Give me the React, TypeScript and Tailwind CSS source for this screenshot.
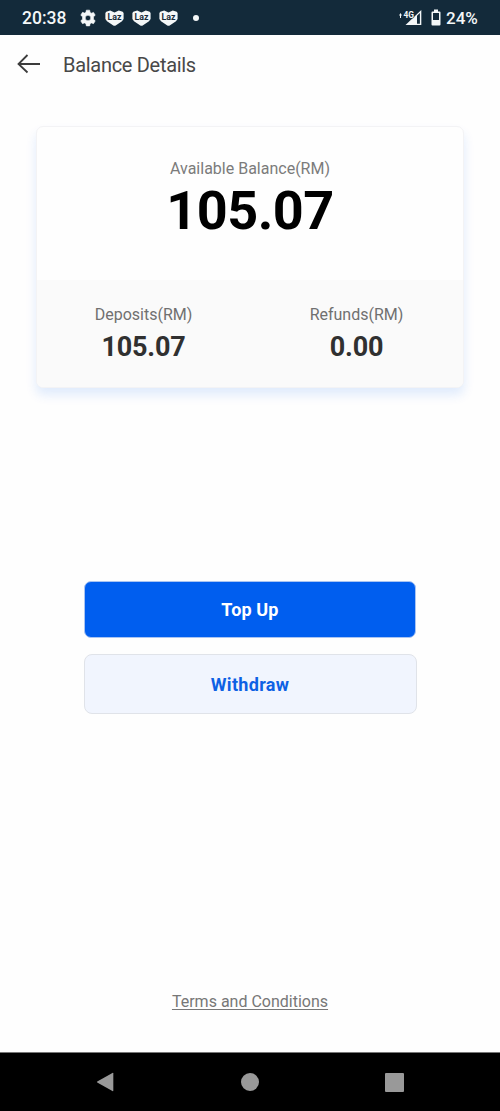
import React from "react";

function GearIcon() {
  return (
    <svg className="ml-[13px] h-[18px] w-[18px]" viewBox="0 0 24 24" fill="#f4f7f8">
      <path
        fillRule="evenodd"
        d="M9.800 1.500h4.400l.6 3 1.700 1 2.900-1 2.200 3.800-2.300 2v3.400l2.300 2-2.200 3.800-2.900-1-1.700 1-.6 3H9.800l-.6-3-1.700-1-2.900 1-2.200-3.800 2.300-2v-3.400l-2.300-2 2.200-3.800 2.900 1 1.700-1zM12 8.300a3.700 3.700 0 1 0 0 7.400 3.700 3.700 0 0 0 0-7.400z"
        stroke="#f4f7f8"
        strokeWidth="0.800"
        strokeLinejoin="round"
      />
    </svg>
  );
}

function LazIcon() {
  return (
    <svg className="h-[16px] w-[19px]" viewBox="0 0 19 16">
      <path
        d="M1.300 1.700 5.200.4 9.500 2.400 13.800.4l3.900 1.300.9 1.200v6l-1.600 2.300-6.300 4.200q-1.200.7-2.400 0L2 11.200.4 8.900v-6z"
        fill="#f4f7f8"
      />
      <text
        x="9.5"
        y="9.600"
        textAnchor="middle"
        textLength="14"
        lengthAdjust="spacingAndGlyphs"
        fontFamily="Roboto, sans-serif"
        fontSize="9"
        fontWeight="700"
        fill="#152a38"
      >
        Laz
      </text>
    </svg>
  );
}

function StatusBar() {
  return (
    <div className="flex h-[35px] items-center bg-[#132a3a] pl-[22px] pr-[22px] text-[#f4f7f8]">
      <span className="w-[44px] whitespace-nowrap pt-[2px] text-[17.5px] font-medium leading-[35px]">20:38</span>
      <GearIcon />
      <div className="ml-[8px] flex gap-[8px]">
        <LazIcon />
        <LazIcon />
        <LazIcon />
      </div>
      <span className="ml-[15px] h-[6px] w-[6px] rounded-full bg-[#f4f7f8]" />
      <div className="ml-auto flex items-center">
        <svg className="h-[18px] w-[24px]" viewBox="0 0 24 18">
          <path d="M1.500 4 3 6.500H2V9H1V6.500H0z" fill="#f4f7f8" />
          <path d="M22.300 1V16H6.500z" fill="#f4f7f8" />
          <path d="M18 6.800 20.900 4V14.800H18z" fill="#132a3a" />
          <text
            x="4.500"
            y="8.900"
            textLength="10.500"
            lengthAdjust="spacingAndGlyphs"
            fontFamily="Roboto, sans-serif"
            fontSize="9.500"
            fontWeight="700"
            fill="#f4f7f8"
            stroke="#132a3a"
            strokeWidth="1"
            paintOrder="stroke"
          >
            4G
          </text>
        </svg>
        <svg className="ml-[8px] h-[18px] w-[10px]" viewBox="0 0 10 18">
          <path
            fillRule="evenodd"
            d="M3 .5h4v2h1.500q1 0 1 1v12q0 1-1 1h-7q-1 0-1-1v-12q0-1 1-1H3zM2 4v7h6V4z"
            fill="#f4f7f8"
          />
        </svg>
        <span className="ml-[5px] w-[32px] whitespace-nowrap text-[17px] font-medium leading-[36px]">24%</span>
      </div>
    </div>
  );
}

function Amount({ label, value }: { label: string; value: string }) {
  return (
    <div className="flex flex-1 flex-col items-center">
      <span className="text-[16px] leading-[20px] text-[#707070]">{label}</span>
      <span className="mt-[6px] text-[27px] font-bold leading-[32px] tracking-[-0.25px] text-[#303030]">{value}</span>
    </div>
  );
}

export default function App() {
  return (
    <div className="flex h-[1111px] w-[500px] flex-col bg-[#fefefe] font-['Roboto',sans-serif]">
      <StatusBar />
      <header className="flex h-[60px] items-center pl-[17px]">
        <svg
          className="-mt-[2px] h-[20px] w-[24px]"
          viewBox="0 0 24 20"
          fill="none"
          stroke="#3c3c3c"
          strokeWidth="1.800"
        >
          <path d="M10.500 1 1.500 10l9 8.500M1.500 10H23" />
        </svg>
        <h1 className="ml-[22px] text-[20px] leading-[24px] tracking-[-0.3px] text-[#484848]">Balance Details</h1>
      </header>

      <main className="flex flex-1 flex-col items-center">
        <section className="mt-[31px] flex h-[262px] w-[428px] flex-col overflow-hidden rounded-[7px] border border-[#f3f3f5] bg-[#fefefe] shadow-[0_7px_11px_rgba(0,95,235,0.12)]">
          <div className="flex h-[153px] flex-col items-center pt-[32px]">
            <span className="text-[16px] leading-[20px] text-[#7b7b7b]">Available Balance(RM)</span>
            <span className="text-[54px] font-bold leading-[64px] tracking-[-0.5px] text-black">105.07</span>
          </div>
          <div className="flex flex-1 bg-[#fafafa] pt-[25px]">
            <Amount label="Deposits(RM)" value="105.07" />
            <Amount label="Refunds(RM)" value="0.00" />
          </div>
        </section>

        <button className="mt-[193px] h-[57px] w-[332px] rounded-[7px] border border-[#a9c4f2] bg-[#005eef] text-[18px] font-bold tracking-[0.15px] text-white">
          Top Up
        </button>
        <button className="mt-[16px] h-[60px] w-[333px] rounded-[8px] border border-[#e0e3e9] bg-[#f1f5fe] text-[18px] font-bold tracking-[0.3px] text-[#0d61e4]">
          Withdraw
        </button>

        <a className="mb-[40px] mt-auto text-[16px] leading-[20px] text-[#777777] underline underline-offset-2">
          Terms and Conditions
        </a>
      </main>

      <nav className="flex h-[59px] items-center border-t border-[#777777] bg-black pl-[96px] pr-[96px]">
        <svg className="h-[20px] w-[18px]" viewBox="0 0 19 20" fill="#999999">
          <path d="M17.300.4q1-.5 1 .6v18q0 1.100-1 .6L1.300 10.500q-.8-.5 0-1z" />
        </svg>
        <span className="ml-[127px] h-[18px] w-[18px] rounded-full bg-[#999999]" />
        <span className="ml-auto h-[19px] w-[19px] rounded-[1px] bg-[#999999]" />
      </nav>
    </div>
  );
}
